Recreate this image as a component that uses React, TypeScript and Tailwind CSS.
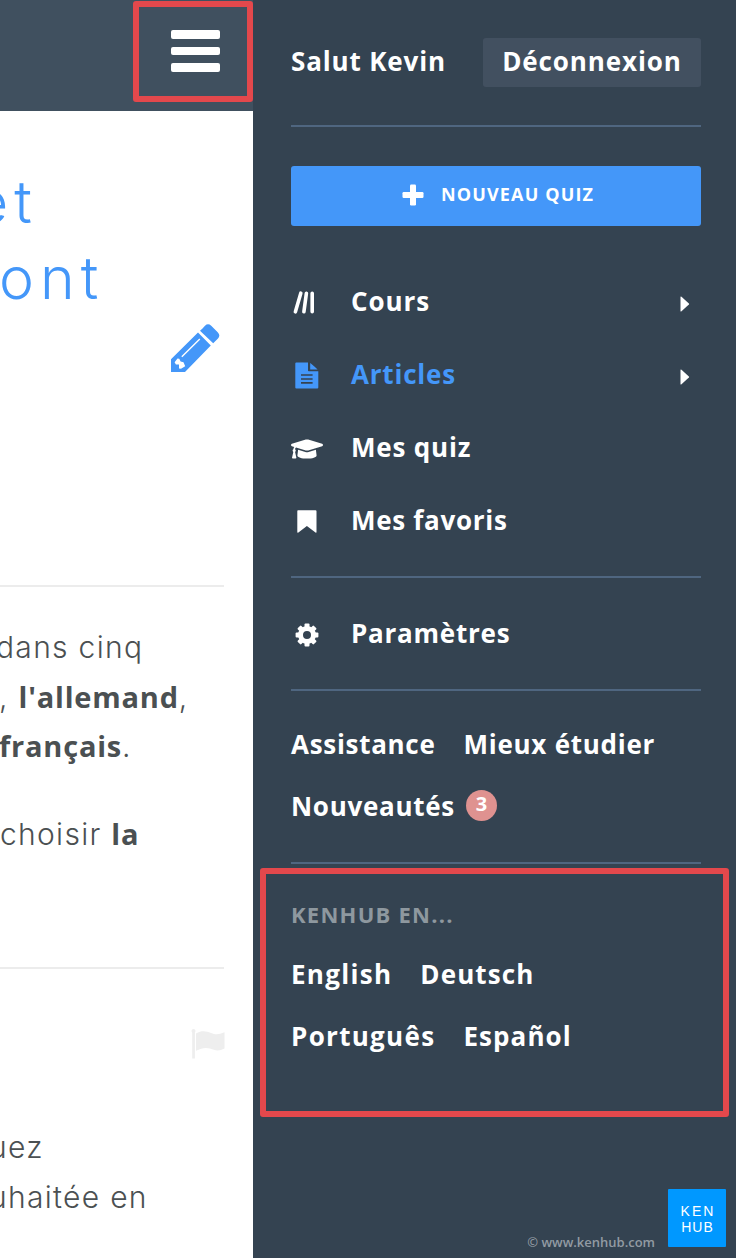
import type { ReactNode } from "react";
import { FaGraduationCap } from "react-icons/fa";

const CoursIcon = () => (
  <svg width="32" height="32" viewBox="0 0 32 32" stroke="currentColor" strokeWidth="3.6" strokeLinecap="round">
    <path d="M9.8 6.2L4.4 24.8M15.4 6.2L12.9 24.8M21.2 6.2V24.8" />
  </svg>
);

const ArticleIcon = () => (
  <svg width="32" height="32" viewBox="0 0 32 32" fill="currentColor">
    <path d="M5.3 2.6H17V10.4Q17 11.2 17.8 11.2H27.3V27.6Q27.3 28.6 26.3 28.6H5.3Q4.3 28.6 4.3 27.6V3.6Q4.3 2.6 5.3 2.6Z" />
    <path d="M19.2 3Q19.8 3 26.6 9.6H19.2Z" />
    <path d="M10 15H21.6M10 19H21.6M10 22.9H21.6" stroke="#344351" strokeWidth="1.7" fill="none" />
  </svg>
);

const BookmarkIcon = () => (
  <svg width="32" height="32" viewBox="0 0 32 32" fill="currentColor">
    <path d="M7 4.3H24.5Q25.5 4.3 25.5 5.3V26Q25.5 27.3 24.5 26.5L15.9 20.1L7.4 26.5Q6.3 27.3 6.3 26V5.3Q6.3 4.3 7 4.3Z" />
  </svg>
);

const CogIcon = () => (
  <svg width="32" height="32" viewBox="0 0 32 32" fill="currentColor">
    <circle cx="16" cy="16" r="6.5" fill="none" stroke="currentColor" strokeWidth="5" />
    {[0, 45, 90, 135].map((a) => (
      <g key={a} transform={`rotate(${a} 16 16)`}>
        <rect x="13.5" y="4.6" width="5" height="5" rx="1" />
        <rect x="13.5" y="22.4" width="5" height="5" rx="1" />
      </g>
    ))}
  </svg>
);

const PencilIcon = () => (
  <svg width="49" height="49" viewBox="0 0 49 49" fill="#4497f9">
    <path d="M31.5 4.5L34 1.7Q37-1.2 40.2 1.7L46.7 8.2Q49.8 11.4 47 14.4L42.2 19.2L29 6.8Z" />
    <path fillRule="evenodd" d="M27 8.6L39.8 21.6L14 48H0V35.3ZM28.3 14.5L10.3 32.2L11.3 33.2L29.3 15.5ZM6.5 34.5L3.6 38.3L4.9 40.5H8V44.6L10 44.7L14.2 42.3L12.5 38.2L9.6 37.4L8.3 34.7Z" />
  </svg>
);

const FlagIcon = () => (
  <svg width="34" height="30" viewBox="0 0 34 30" fill="#eeeeee">
    <rect x="1.2" y="1.5" width="2.7" height="28" />
    <circle cx="2.5" cy="2" r="2" />
    <path d="M5 4.4C11 1 15 2 20 4C25 6 28 5.5 33.5 3.3V19.6C28 22.5 24 21.5 19 19.6C14 18 10 19.5 5 21.8Z" />
  </svg>
);

const Caret = () => (
  <svg width="10" height="16" viewBox="0 0 10 16" fill="white">
    <path d="M.5 1Q.5 0 1.5.7L8.9 7.4Q9.5 8 8.9 8.6L1.5 15.3Q.5 16 .5 15Z" />
  </svg>
);

const menu = [
  { label: "Cours", icon: <CoursIcon />, caret: true, style: "text-white tracking-[0.9px]" },
  { label: "Articles", icon: <ArticleIcon />, caret: true, style: "text-[#4497f9] tracking-[0.8px]" },
  { label: "Mes quiz", icon: <FaGraduationCap className="h-[26px] w-8" />, caret: false, style: "text-white tracking-[0.8px]" },
  { label: "Mes favoris", icon: <BookmarkIcon />, caret: false, style: "text-white tracking-[0.7px]" },
];

type ItemProps = { label: string; icon: ReactNode; caret?: boolean; style: string };

const MenuItem = ({ label, icon, caret, style }: ItemProps) => (
  <li className={`flex h-[73px] items-center ${style}`}>
    <span className="flex w-8 justify-center pt-1">{icon}</span>
    <a href="#" className="ml-7 flex-1 pt-0.5">{label}</a>
    {caret && <span className="mr-[11px] pt-1.5"><Caret /></span>}
  </li>
);

const Divider = ({ className }: { className: string }) => (
  <hr className={`h-0.5 shrink-0 border-0 bg-[#4f6680] ${className}`} />
);

const Bold = ({ children }: { children: ReactNode }) => (
  <b className="font-['Open_Sans',sans-serif] text-[29px] leading-none font-bold tracking-[0.8px]">{children}</b>
);

const Article = () => (
  <main className="flex h-full w-[253px] shrink-0 flex-col bg-white">
    <header className="flex h-[111px] shrink-0 justify-end bg-[#40505f] pt-px">
      <button className="z-10 flex h-[101px] w-[120px] flex-col items-center gap-2 rounded-[3px] border-[6px] border-[#e3484c] pt-[23px] pl-[5px]">
        <span className="h-[8.5px] w-[49px] rounded-[2px] bg-white" />
        <span className="h-[8.5px] w-[49px] rounded-[2px] bg-white" />
        <span className="h-[8.5px] w-[49px] rounded-[2px] bg-white" />
      </button>
    </header>
    <div className="flex flex-1 flex-col overflow-hidden font-[Inter,sans-serif] text-[30px] leading-[49.5px] font-light tracking-[1.3px] whitespace-nowrap text-[#4b5052]">
      <h1 className="mt-[53px] text-[59px] leading-[76px] font-light tracking-[6px] text-[#4497f9]">
        <span className="-ml-[26px] block">et</span>
        <span className="-ml-px block">ont</span>
      </h1>
      <div className="mt-[8px] ml-[171px]"><PencilIcon /></div>
      <hr className="mt-[212px] mr-[29px] h-0.5 border-0 bg-[#ececec]" />
      <p className="mt-[36px]">
        <span className="-ml-1 block">dans cinq</span>
        <span className="-ml-px block">, <Bold>l'allemand</Bold>,</span>
        <span className="-ml-px block"><Bold>français</Bold>.</span>
      </p>
      <p className="mt-[38px]">choisir <Bold>la</Bold></p>
      <hr className="mt-[108px] mr-[29px] h-0.5 border-0 bg-[#ececec]" />
      <div className="mt-[60px] ml-[191px]"><FlagIcon /></div>
      <p className="mt-[64px]">
        <span className="-ml-[11px] block">uez</span>
        <span className="-ml-[11px] block">uhaitée en</span>
      </p>
    </div>
  </main>
);

const Sidebar = () => (
  <aside className="flex h-full w-[483px] shrink-0 flex-col bg-[#344351] pr-[35px] pl-[38px] text-[26px] font-bold whitespace-nowrap text-white">
    <div className="mt-[38px] flex h-[49px] shrink-0 items-center justify-between">
      <span className="pb-0.5 tracking-[0.85px]">Salut Kevin</span>
      <button className="h-[49px] w-[218px] rounded-[3px] bg-[#425060] pb-0.5 tracking-[0.9px]">Déconnexion</button>
    </div>
    <Divider className="mt-[38px]" />
    <button className="mt-[39px] flex h-[60px] shrink-0 items-center rounded-[3px] bg-[#4497f9] pl-[111px] text-lg font-bold">
      <svg width="22" height="22" viewBox="0 0 22 22" fill="white" className="mb-0.5">
        <rect x="8" y="0.5" width="6" height="21" rx="1.2" />
        <rect x="0.5" y="8" width="21" height="6" rx="1.2" />
      </svg>
      <span className="ml-[17px] pb-1 tracking-[1.15px]">NOUVEAU QUIZ</span>
    </button>
    <ul className="mt-[38px] shrink-0">
      {menu.map((item) => (
        <MenuItem key={item.label} {...item} />
      ))}
    </ul>
    <Divider className="mt-5" />
    <ul className="mt-[18px] shrink-0">
      <MenuItem label="Paramètres" icon={<CogIcon />} style="text-white tracking-[0.75px]" />
    </ul>
    <Divider className="mt-5" />
    <div className="mt-[22px] shrink-0 leading-[62px]">
      <div className="flex gap-7">
        <a href="#" className="tracking-[0.7px]">Assistance</a>
        <a href="#" className="tracking-[0.75px]">Mieux étudier</a>
      </div>
      <div className="flex items-center gap-[11px]">
        <a href="#" className="tracking-[0.7px]">Nouveautés</a>
        <span className="mb-0.5 flex h-[31px] w-[31px] items-center justify-center rounded-full bg-[#df9290] pb-0.5 text-xl">3</span>
      </div>
    </div>
    <Divider className="mt-[25px]" />
    <section className="mt-1 -ml-[31px] h-[249px] w-[469px] shrink-0 rounded-[3px] border-[6px] border-[#e3484c] pt-[25px] pl-[25px] leading-[62px]">
      <h2 className="text-[22px] leading-[30px] font-bold tracking-[1.25px] text-[#8e989f]">KENHUB EN...</h2>
      <div className="mt-3.5 flex gap-7">
        <a href="#" className="tracking-[1.3px]">English</a>
        <a href="#" className="tracking-[1.1px]">Deutsch</a>
      </div>
      <div className="flex gap-7">
        <a href="#" className="tracking-[1.3px]">Português</a>
        <a href="#" className="tracking-[1.1px]">Español</a>
      </div>
    </section>
    <footer className="mt-auto -mr-[25px] mb-[11px] flex items-end justify-end gap-[13px]">
      <span className="text-[13px] leading-[9px] font-semibold text-[#929ba3]">© www.kenhub.com</span>
      <div className="flex h-[58px] w-[58px] flex-col items-center justify-center rounded-[1px] bg-[#0098ff] pt-px font-['Liberation_Sans',sans-serif] text-sm leading-4 font-normal">
        <span className="pl-[2px] tracking-[2px]">KEN</span>
        <span className="pl-px tracking-[1px]">HUB</span>
      </div>
    </footer>
  </aside>
);

export default function App() {
  return (
    <div className="flex h-[1258px] w-[736px] overflow-hidden font-['Open_Sans','Noto_Sans',sans-serif]">
      <Article />
      <Sidebar />
    </div>
  );
}
